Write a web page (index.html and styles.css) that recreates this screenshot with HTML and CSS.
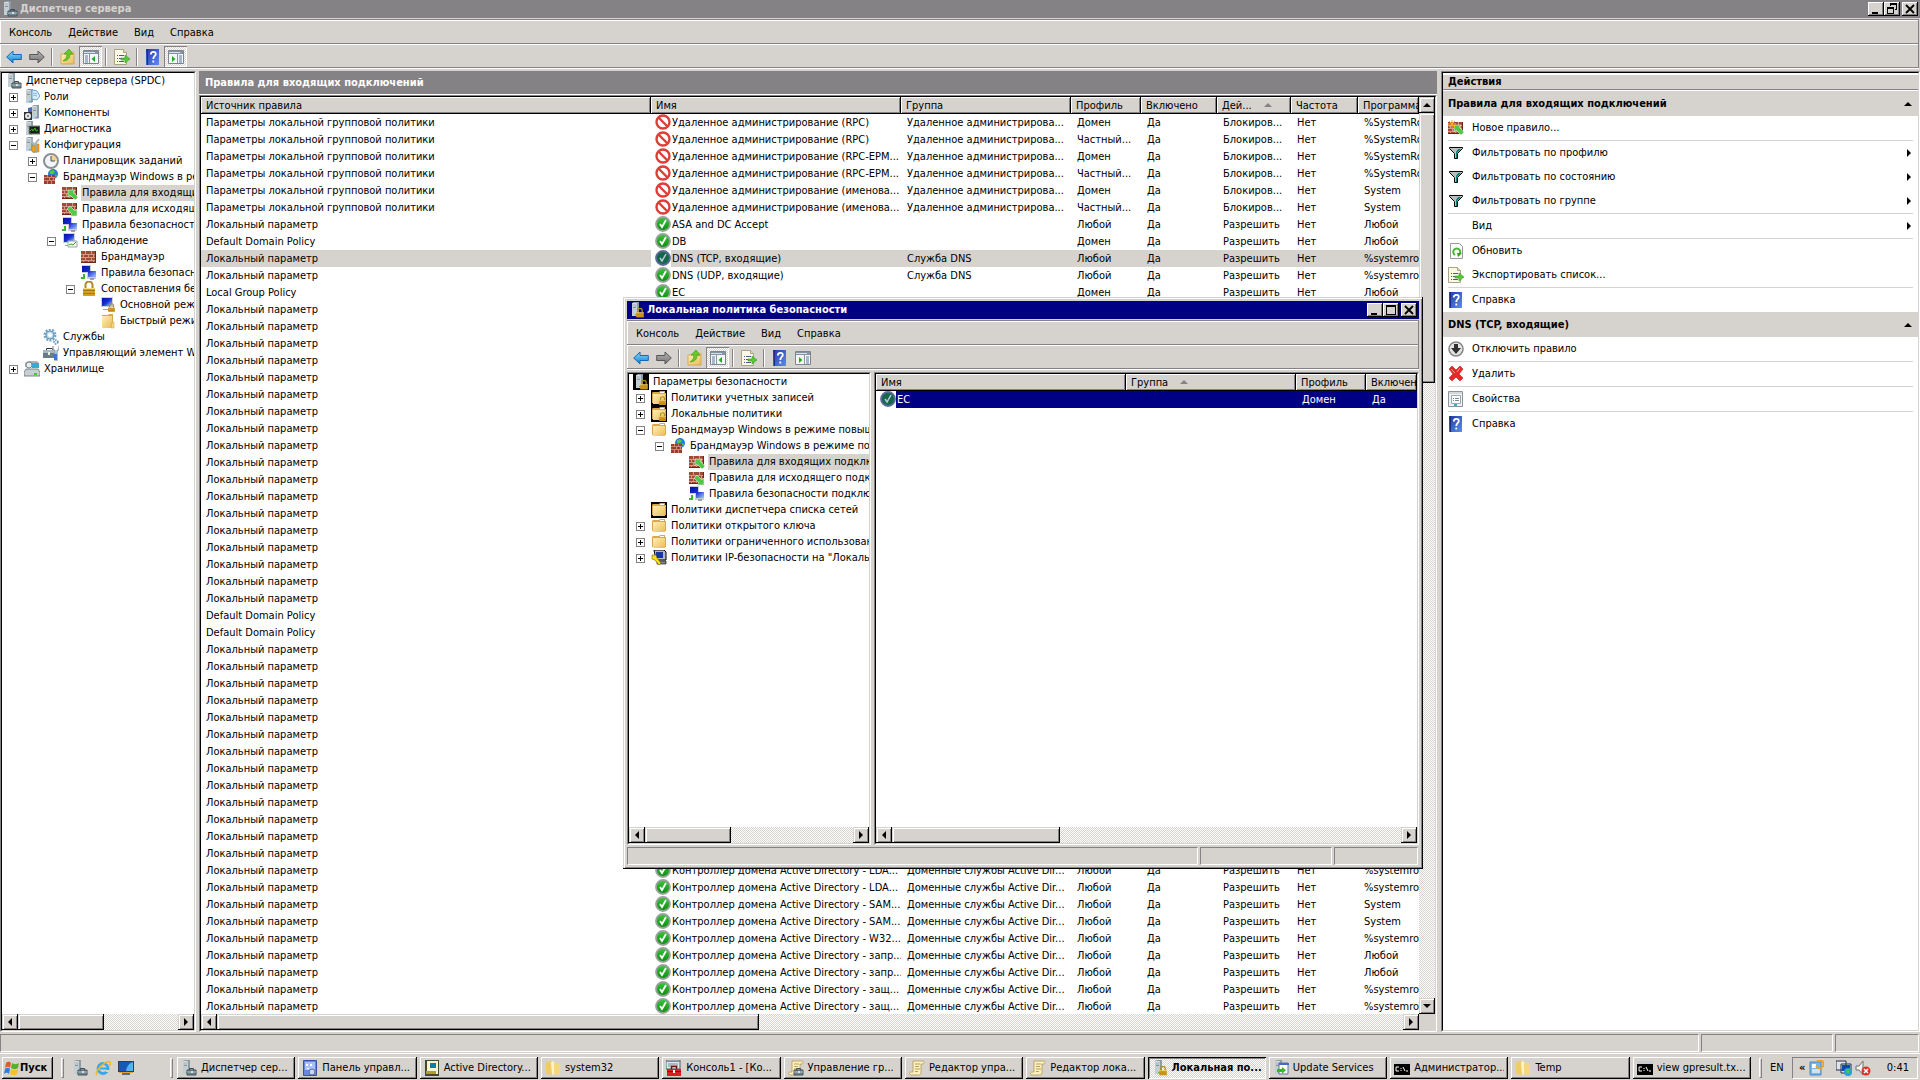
FILE: index.html
```html
<!DOCTYPE html>
<html lang="ru">
<head>
<meta charset="utf-8">
<title>Диспетчер сервера</title>
<link rel="stylesheet" href="styles.css">
</head>
<body>
<svg class="sprite" aria-hidden="true">
  <defs>
    <linearGradient id="g-blue" x1="0" y1="0" x2="0" y2="1"><stop offset="0" stop-color="#8fdcff"/><stop offset="1" stop-color="#0a7fd0"/></linearGradient>
    <linearGradient id="g-gray" x1="0" y1="0" x2="0" y2="1"><stop offset="0" stop-color="#b8b8b8"/><stop offset="1" stop-color="#707070"/></linearGradient>
    <linearGradient id="g-fold" x1="0" y1="0" x2="1" y2="1"><stop offset="0" stop-color="#fff0b8"/><stop offset="1" stop-color="#e8bc58"/></linearGradient>
    <linearGradient id="g-help" x1="0" y1="0" x2="1" y2="1"><stop offset="0" stop-color="#2238a8"/><stop offset="1" stop-color="#5f8cf0"/></linearGradient>
    <linearGradient id="g-scr" x1="0" y1="0" x2="1" y2="1"><stop offset="0" stop-color="#0010a0"/><stop offset=".5" stop-color="#1830d0"/><stop offset="1" stop-color="#a8c8ff"/></linearGradient>
    <linearGradient id="g-ok" x1="0" y1="0" x2="0" y2="1"><stop offset="0" stop-color="#3cc83c"/><stop offset="1" stop-color="#0a8a10"/></linearGradient>
    <symbol id="tower" viewBox="0 0 16 16"><path d="M2 1l2-1h5v13l-2 1H2z" fill="#8d9da6"/><path d="M2 1h5v13H2z" fill="#c3ced4"/><path d="M3 3h3M3 5h3" stroke="#4c5a62"/><path d="M3 2h3M3 4h3" stroke="#eef3f5"/><path d="M5 12h2v1H5z" fill="#38d818"/></symbol>
    <symbol id="case" viewBox="0 0 16 16"><path d="M8.500 10V8.500h4V10" fill="none" stroke="#3c4650"/><path d="M6 10h9v5H6z" fill="#6e8490" stroke="#46545c"/><path d="M6 12h9" stroke="#aebcc4"/><path d="M10 11h2v2h-2z" fill="#d8e0e4"/></symbol>
    <symbol id="server" viewBox="0 0 16 16"><use href="#tower"/><use href="#case"/></symbol>
    <symbol id="roles" viewBox="0 0 16 16"><use href="#tower"/><path d="M8 1l5 1 3 5-3 4-5-1z" fill="#d8ecfa" stroke="#6aa4d0"/><path d="M9 4l4 1M9 6l4 1" stroke="#88b8e0"/></symbol>
    <symbol id="features" viewBox="0 0 16 16"><g transform="translate(6 0)"><use href="#tower"/></g><path d="M4 3l4-1v8l-4 2z" fill="#5468b8"/><path d="M0 7h8v8H0z" fill="#303438"/><circle cx="4" cy="11" r="3" fill="#e8e8e8"/><circle cx="4" cy="11" r="1" fill="#606060"/></symbol>
    <symbol id="diag" viewBox="0 0 16 16"><use href="#tower"/><path d="M5 5h11v8H5z" fill="#182018" stroke="#808880"/><path d="M6 10l2-2 1 2 2-3 1 3 2-1" fill="none" stroke="#38b818"/></symbol>
    <symbol id="config" viewBox="0 0 16 16"><use href="#tower"/><path d="M8 1v4l2 2v8h2V6l3-4" fill="none" stroke="#a8b4bc" stroke-width="2"/><path d="M8 9h3v6H8zM13 7h2v8h-2z" fill="#f0a820" stroke="#c07808" stroke-width=".5"/></symbol>
    <symbol id="clock" viewBox="0 0 16 16"><circle cx="8" cy="8" r="7" fill="#f2f6fa" stroke="#8a9096" stroke-width="2"/><path d="M8 8V2a6 6 0 0 1 6 6z" fill="#f4cf90"/><path d="M8 3v5h4" fill="none" stroke="#405060"/></symbol>
    <symbol id="wall" viewBox="0 0 16 16"><path d="M0 2h15v12H0z" fill="#a44a34"/><path d="M0 5.500h15M0 8.500h15M0 11.500h15M4.500 2v3M10.500 2v3M2.500 6v2M7.500 6v2M12.500 6v2M4.500 9v2M10.500 9v2M2.500 12v2M7.500 12v2M12.500 12v2" stroke="#cf9a88"/><path d="M0 13.500h15M14.500 2v12" stroke="#6e2818"/></symbol>
    <symbol id="globewall" viewBox="0 0 16 16"><circle cx="10" cy="5" r="5" fill="#2a78d8"/><path d="M7 2l3-1 2 2-2 2-3 0zM12 5l2 1-1 3z" fill="#58c838"/><path d="M1 6h11v9H1z" fill="#98402c"/><path d="M1 8.500h11M1 11.500h11M4.500 6v2M8.500 6v2M6.500 9v2M10.500 9v2M4.500 12v3M8.500 12v3" stroke="#c88878"/></symbol>
    <symbol id="rulein" viewBox="0 0 16 16"><use href="#wall"/><path d="M6 5h7l-2 2 5 5-3 3-5-5-2 2z" fill="#50c848" stroke="#e4f8e0" stroke-width=".6"/></symbol>
    <symbol id="ruleout" viewBox="0 0 16 16"><use href="#wall"/><path d="M15 15H8l2-2-5-5 3-3 5 5 2-2z" fill="#50c848" stroke="#e4f8e0" stroke-width=".6"/></symbol>
    <symbol id="newrule" viewBox="0 0 16 16"><use href="#rulein"/><path d="M4 0v8M0 4h8M1 1l6 6M7 1L1 7" stroke="#f8b020"/></symbol>
    <symbol id="nets" viewBox="0 0 16 16"><path d="M1 0h9v8H1zM6 6h9v8H6z" fill="#c8ccd4"/><path d="M1 1h8v6H1zM7 6h8v6H7z" fill="url(#g-scr)"/><path d="M9 13h4v2H9z" fill="#98a0a8"/><path d="M0 12h4v2H0zM2 9h2v3H2z" fill="#38b828"/></symbol>
    <symbol id="monitor" viewBox="0 0 16 16"><path d="M1 0h12v10H1z" fill="#c8d0d8"/><path d="M2 1h10v8H2z" fill="url(#g-scr)"/><path d="M5 10h4v2H3v1h7v-3z" fill="#98a0a8"/></symbol>
    <symbol id="watch" viewBox="0 0 16 16"><use href="#monitor"/><path d="M6 8h9v6H6z" fill="#f0fff0" stroke="#90a8b8"/><path d="M7 12l2-1 2 1 3-3" fill="none" stroke="#28a828"/></symbol>
    <symbol id="lock" viewBox="0 0 16 16"><path d="M4.500 7V4a3.500 3.500 0 0 1 7 0v3" fill="none" stroke="#b08828" stroke-width="2"/><path d="M2 7h12v8H2z" fill="#d8a020"/><path d="M2 9.500h12M2 12.500h12" stroke="#a87810"/><path d="M2 7.500h12" stroke="#f8dc80"/></symbol>
    <symbol id="monlock" viewBox="0 0 16 16"><use href="#monitor"/><use href="#lock" x="7" y="6" width="9" height="10"/></symbol>
    <symbol id="folder" viewBox="0 0 16 16"><path d="M2 2h6l1-1h4v14H2z" fill="#d8a848"/><path d="M2 3h10v12H2z" fill="url(#g-fold)"/><path d="M12 9h2v6h-3z" fill="#f4d888" stroke="#c89838" stroke-width=".5"/></symbol>
    <symbol id="openfolder" viewBox="0 0 16 16"><path d="M1 3l1-1h6l1-1h5v2h1v10H1z" fill="#dca848"/><path d="M9 2h4v1H9z" fill="#fff"/><path d="M2 4h12v10H2z" fill="url(#g-fold)"/></symbol>
    <symbol id="folderdark" viewBox="0 0 16 16"><path d="M0 0h16v16H0z"/><use href="#openfolder"/></symbol>
    <symbol id="folderlock" viewBox="0 0 16 16"><use href="#folderdark"/><use href="#lock" x="7" y="6" width="9" height="10"/></symbol>
    <symbol id="seclock" viewBox="0 0 16 16"><use href="#tower" x="1"/><use href="#lock" x="6" y="6" width="10" height="10"/></symbol>
    <symbol id="seclockdark" viewBox="0 0 16 16"><path d="M0 0h16v16H0z"/><use href="#seclock"/></symbol>
    <symbol id="ipsec" viewBox="0 0 16 16"><path d="M3 0h10l2 2v8H5z" fill="#b8b8b8" stroke="#000"/><path d="M5 2h7v6H5z" fill="#1838a0"/><path d="M6 11h9v3H6z" fill="#888" stroke="#000" stroke-width=".6"/><path d="M1 5l4 0 1 3 4 5-2 2-4-5-3-1z" fill="#f8e020" stroke="#806000" stroke-width=".6"/></symbol>
    <symbol id="gears" viewBox="0 0 16 16"><circle cx="7" cy="6" r="5" fill="none" stroke="#78a4c4" stroke-width="3" stroke-dasharray="2 1.100"/><circle cx="7" cy="6" r="4" fill="#b8dcf0" stroke="#6894b4"/><circle cx="7" cy="6" r="2" fill="#fff"/><circle cx="13" cy="13" r="2" fill="#d8ecf8" stroke="#6894b4" stroke-width="1.500" stroke-dasharray="1.500 1"/></symbol>
    <symbol id="toolbox" viewBox="0 0 16 16"><path d="M3.500 5V3.500h6V5" fill="none" stroke="#303840"/><path d="M0 5h12v8H0z" fill="#687c88"/><path d="M0 5h12v3H0z" fill="#a8b8c0"/><path d="M5 7h2v3H5z" fill="#e8eef0"/><path d="M10 1v3l2 2v9h2V6l2-2V1" fill="none" stroke="#98a8b4" stroke-width="1.500"/><path d="M11 9h3v6h-3z" fill="#3878d0"/></symbol>
    <symbol id="disk" viewBox="0 0 16 16"><path d="M1 2l3-2h9l2 2v4H1z" fill="#a8b4b8"/><circle cx="5" cy="4" r="3" fill="#e8eef0" stroke="#78848c"/><path d="M8 2h7v5H8z" fill="#38a8d8"/><path d="M2 8h12l2 3v4H0v-4z" fill="#c8d0d4" stroke="#606c74" stroke-width=".8"/><path d="M10 12h3v2h-3z" fill="#38d018"/></symbol>
    <symbol id="ok" viewBox="0 0 16 16"><circle cx="8" cy="8" r="7" fill="url(#g-ok)" stroke="#9aa29c" stroke-width="1.800"/><path d="M5 8l2 3 4-7" fill="none" stroke="#fff" stroke-width="1.800"/></symbol>
    <symbol id="oksel" viewBox="0 0 16 16"><circle cx="8" cy="8" r="7" fill="#146848" stroke="#5c6c98" stroke-width="1.800"/><path d="M5 8l2 3 4-7" fill="none" stroke="#b8c8e0" stroke-width="1.500"/></symbol>
    <symbol id="deny" viewBox="0 0 16 16"><circle cx="8" cy="8" r="6.500" fill="#fff" stroke="#e03c38" stroke-width="2.400"/><path d="M3.500 3.500l9 9" stroke="#e03c38" stroke-width="2.400"/></symbol>
    <symbol id="back" viewBox="0 0 16 16"><path d="M.7 8L7 2v3.500h8.300v5H7V14z" fill="url(#g-blue)" stroke="#1468b8"/></symbol>
    <symbol id="fwd" viewBox="0 0 16 16"><path d="M15.300 8L9 2v3.500H.7v5H9V14z" fill="url(#g-gray)" stroke="#585858"/></symbol>
    <symbol id="up" viewBox="0 0 16 16"><path d="M1 5h13v10H1z" fill="url(#g-fold)" stroke="#d0a040" stroke-width=".8"/><path d="M10 3h4v2h-4z" fill="#f8e0a0" stroke="#d0a040" stroke-width=".6"/><path d="M3 12c3-2 4-4 4-7H4l5-5 4 5h-3c0 4-2 7-7 7z" fill="#68c828" stroke="#389810" stroke-width=".6"/></symbol>
    <symbol id="paneleft" viewBox="0 0 16 16"><path d="M.5 1.500h15v13H.5z" fill="#f4f6f8" stroke="#7c8690"/><path d="M1 2h14v3H1z" fill="#8494a4"/><path d="M1 3.500h11" stroke="#d8e0e8"/><path d="M2 7h3M2 9h3M2 11h3M2 13h3" stroke="#5878a8"/><path d="M6.500 5v9" stroke="#8894a0"/><path d="M12 7v6L8.500 10z" fill="#28a828"/></symbol>
    <symbol id="paneright" viewBox="0 0 16 16"><path d="M.5 1.500h15v13H.5z" fill="#f4f6f8" stroke="#7c8690"/><path d="M1 2h14v3H1z" fill="#8494a4"/><path d="M1 3.500h11" stroke="#d8e0e8"/><path d="M11 7h3M11 9h3M11 11h3M11 13h3" stroke="#5878a8"/><path d="M9.500 5v9" stroke="#8894a0"/><path d="M4 7v6l3.500-3z" fill="#28a828"/></symbol>
    <symbol id="export" viewBox="0 0 16 16"><path d="M.5.500h9l3 3v12H.5z" fill="#fbf8e4" stroke="#a8a488"/><path d="M9.500.500v3h3" fill="#e4dfc0" stroke="#a8a488"/><path d="M3 6.500h1M5 6.500h5M3 9.500h1M5 9.500h3M3 12.500h1M5 12.500h5" stroke="#50588c"/><path d="M7 9h4V6l5 4-5 4v-3H7z" fill="#58c838" stroke="#38a020" stroke-width=".6"/></symbol>
    <symbol id="help" viewBox="0 0 16 16"><path d="M1 0h13v16H1z" fill="url(#g-help)"/><path d="M2.500 0v16" stroke="#1c2c88"/><path d="M5.800 5.500c0-3.500 5-3.500 5-.5 0 2-2.500 2-2.500 5M8.300 11.500v2" fill="none" stroke="#fff" stroke-width="1.800"/></symbol>
    <symbol id="funnel" viewBox="0 0 16 16"><path d="M1.500 2.500h13v1l-5 5v5h-3v-5l-5-5z" fill="#b8c0c0" stroke="#000"/><path d="M10 4h3L9 8v5H8V7z" fill="#008080"/></symbol>
    <symbol id="refresh" viewBox="0 0 16 16"><path d="M2.500.500h9l3 3v12h-12z" fill="#fafafa" stroke="#9a9a9a"/><path d="M7 12a3.500 3.500 0 1 1 3.500 0" fill="none" stroke="#48b830" stroke-width="2"/><path d="M9 10h5l-4 4z" fill="#38a020"/></symbol>
    <symbol id="disable" viewBox="0 0 16 16"><circle cx="8" cy="8" r="7" fill="#e4e4e4" stroke="#888" stroke-width="1.600"/><path d="M6 3h4v4h3l-5 6-5-6h3z" fill="#303030"/></symbol>
    <symbol id="delete" viewBox="0 0 16 16"><path d="M1 3l3-3 4 4 4-4 3 3-4 5 4 4-3 3-4-4-4 4-3-3 4-4z" fill="#e82828" stroke="#b81818" stroke-width=".6"/><path d="M3 3l4 4M12 2L9 6" stroke="#ff9898"/></symbol>
    <symbol id="props" viewBox="0 0 16 16"><path d="M.5.500h14v15H.5z" fill="#eef0f2" stroke="#8c949c"/><path d="M3.500 4.500h9v8h-9z" fill="#fff" stroke="#a0a8b0"/><path d="M1 2h13" stroke="#b8c0c8"/><path d="M5 7.500h1M7 7.500h4M5 9.500h1M7 9.500h4" stroke="#808890"/><path d="M6 14h3" stroke="#28b0e0" stroke-width="2"/></symbol>
    <symbol id="flag" viewBox="0 0 16 16"><path d="M2 3c2-2 4-1 5 0L6 8C5 7 3 6 1 8z" fill="#e85820"/><path d="M8 3c2 1 4 2 7 0l-1 5c-3 2-5 1-7 0z" fill="#58b028"/><path d="M1 9c2-2 4-1 5 0l-1 5c-1-1-3-2-5 0z" fill="#3080d8"/><path d="M7 9c2 1 4 2 7 0l-1 5c-3 2-5 1-7 0z" fill="#f8c020"/></symbol>
    <symbol id="ie" viewBox="0 0 16 16"><circle cx="8" cy="8.500" r="5" fill="none" stroke="#38a8e8" stroke-width="2.800"/><path d="M5 8.500h8" stroke="#38a8e8" stroke-width="2"/><path d="M11 10h4v2h-4z" fill="#d6d3ce"/><path d="M2 15C-1 12 10 0 15 2c1 1 0 3-1 4" fill="none" stroke="#f0b820" stroke-width="1.500"/></symbol>
    <symbol id="desktop" viewBox="0 0 16 16"><path d="M0 1h16v11H0z" fill="#383c50"/><path d="M1 2h14v9H1z" fill="#1858b8"/><path d="M8 11C9 5 12 3 15 2v9z" fill="#58b0f0"/><path d="M1 12h14v1H1z" fill="#e0a030"/><path d="M4 13h8v2H4z" fill="#60687c"/></symbol>
    <symbol id="cpl" viewBox="0 0 16 16"><path d="M1.500.500h13v15h-13z" fill="#6888e0" stroke="#3850a8"/><path d="M3 2h10v8H3z" fill="#a8c0f8"/><path d="M4 4h2v2H4zM8 4h2v2H8zM5 8h2v1H5z" fill="#fff"/><circle cx="10" cy="12" r="3" fill="#c8d4e8" stroke="#5868a0"/></symbol>
    <symbol id="ad" viewBox="0 0 16 16"><path d="M1 0h14v16H1z" fill="#404c30"/><path d="M3 1h11v13H3z" fill="#f8f4d0"/><path d="M6 3h6v5H6z" fill="#1878a0"/><path d="M2 11h10v3H2z" fill="#b0a028"/></symbol>
    <symbol id="mmc" viewBox="0 0 16 16"><path d="M0 0h14v9H0z" fill="#e4e8ec" stroke="#485868"/><path d="M0 1.500h14M2 4h10M2 6h10" stroke="#788898"/><path d="M5.500 9V6.500h5V9" fill="none" stroke="#701010" stroke-width="1.500"/><path d="M1 9h14v7H1z" fill="#d82020"/><path d="M1 11.500h14" stroke="#881010"/><path d="M7 10h2v3H7z" fill="#fff"/></symbol>
    <symbol id="scroll" viewBox="0 0 16 16"><path d="M4 1h10c2 0 1 3 0 3h-2v9c0 2-2 2-3 2H2c-2 0-2-3 0-3h2z" fill="#fbf0c0" stroke="#b89850" stroke-width=".8"/><path d="M6 4h5M6 6.500h4M6 9h5M6 11.500h3" stroke="#b8a060"/></symbol>
    <symbol id="gpm" viewBox="0 0 16 16"><use href="#scroll"/><use href="#case"/></symbol>
    <symbol id="wsus" viewBox="0 0 16 16"><use href="#tower"/><path d="M6 3h9v11H6z" fill="#fff" stroke="#6070a8"/><path d="M6 3h10v2H6z" fill="#5068b8"/><path d="M4 9h5V7l4 3-4 4v-2H4z" fill="#38b828"/></symbol>
    <symbol id="cmd" viewBox="0 0 16 16"><path d="M0 1h16v14H0z" fill="#000"/><path d="M0 1h16v3H0z" fill="#c8ccd0"/><path d="M5 7H2v4h3M7 8v1M7 10v1M9 7l2 4M12 11h2" fill="none" stroke="#fff"/></symbol>
    <symbol id="open2" viewBox="0 0 16 16"><path d="M1 2l6-1v14l-6-1z" fill="#f0cc68"/><path d="M6 2l3-1 1 12-3 2z" fill="#fff4c0"/><path d="M9 3l6 1v10l-6 1z" fill="#f4d880"/></symbol>
    <symbol id="wupd" viewBox="0 0 16 16"><path d="M2 2h11v13H2z" fill="#78b8e8" stroke="#4888c0"/><path d="M4 4h4v4H4z" fill="#fff"/><path d="M4 9h8v4H4z" fill="#c8e4f8"/><path d="M9 1a4 4 0 1 1-1 5" fill="none" stroke="#f0a020" stroke-width="2"/></symbol>
    <symbol id="net" viewBox="0 0 16 16"><path d="M0 1h10v9H0zM5 4h10v9H5z" fill="#e0e4e8" stroke="#203048"/><path d="M6 5h8v6H6z" fill="#0848b0"/><circle cx="12" cy="12" r="4" fill="#28a0d8"/><path d="M10 10l3-1 1 3-3 2z" fill="#48c838"/></symbol>
    <symbol id="mute" viewBox="0 0 16 16"><path d="M1 6h3l4-5v14l-4-5H1z" fill="#f0f0f0" stroke="#707070"/><circle cx="11" cy="11" r="4.500" fill="#e03028"/><path d="M9 9l4 4M13 9l-4 4" stroke="#fff" stroke-width="1.500"/></symbol>
    <symbol id="tl" viewBox="0 0 8 8"><path d="M6 0v8L2 4z"/></symbol>
    <symbol id="tr" viewBox="0 0 8 8"><path d="M2 0v8l4-4z"/></symbol>
    <symbol id="tu" viewBox="0 0 8 8"><path d="M0 6h8L4 2z"/></symbol>
    <symbol id="td" viewBox="0 0 8 8"><path d="M0 2h8L4 6z"/></symbol>
    <symbol id="wmin" viewBox="0 0 14 12"><path d="M3 9h6v2H3z"/></symbol>
    <symbol id="wmax" viewBox="0 0 14 12"><path d="M2 1h10v10H2zM3 3v7h8V3z" fill-rule="evenodd"/></symbol>
    <symbol id="wres" viewBox="0 0 14 12"><path d="M5 0h7v7h-2V6h1V2H6v1H5z"/><path d="M2 4h7v7H2zM3 6v4h5V6z" fill-rule="evenodd"/></symbol>
    <symbol id="wx" viewBox="0 0 14 12"><path d="M3 2l8 8M11 2l-8 8" stroke="#000" stroke-width="1.800"/></symbol>
  </defs>
</svg>

<div class="app">
  <header class="titlebar">
    <svg class="ico"><use href="#server"/></svg>
    <h1 class="caption">Диспетчер сервера</h1>
    <div class="winbtns">
      <button class="wb" aria-label="Свернуть"><svg><use href="#wmin"/></svg></button><button class="wb" aria-label="Восстановить"><svg><use href="#wres"/></svg></button><button class="wb wb-close" aria-label="Закрыть"><svg><use href="#wx"/></svg></button>
    </div>
  </header>
  <div class="bars">
    <nav class="menubar"><button>Консоль</button><button>Действие</button><button>Вид</button><button>Справка</button></nav>
    <div class="toolbar">
      <button class="tb" aria-label="Назад"><svg class="ico"><use href="#back"/></svg></button>
      <button class="tb" aria-label="Вперед"><svg class="ico"><use href="#fwd"/></svg></button>
      <i class="sep"></i>
      <button class="tb" aria-label="Вверх"><svg class="ico"><use href="#up"/></svg></button>
      <button class="tb on" aria-label="Дерево консоли"><svg class="ico"><use href="#paneleft"/></svg></button>
      <i class="sep"></i>
      <button class="tb" aria-label="Экспорт"><svg class="ico"><use href="#export"/></svg></button>
      <i class="sep"></i>
      <button class="tb" aria-label="Справка"><svg class="ico"><use href="#help"/></svg></button>
      <button class="tb on" aria-label="Панель действий"><svg class="ico"><use href="#paneright"/></svg></button>
    </div>
  </div>

  <main class="main">
    <section class="sunken side"><div class="sunken-in">
      <div class="tree">
        <div class="row root"><svg class="ico"><use href="#server"/></svg><span>Диспетчер сервера (SPDC)</span></div>
        <ul>
          <li><div class="row"><i class="box plus"></i><svg class="ico"><use href="#roles"/></svg><span>Роли</span></div></li>
          <li><div class="row"><i class="box plus"></i><svg class="ico"><use href="#features"/></svg><span>Компоненты</span></div></li>
          <li><div class="row"><i class="box plus"></i><svg class="ico"><use href="#diag"/></svg><span>Диагностика</span></div></li>
          <li><div class="row"><i class="box"></i><svg class="ico"><use href="#config"/></svg><span>Конфигурация</span></div>
            <ul>
              <li><div class="row"><i class="box plus"></i><svg class="ico"><use href="#clock"/></svg><span>Планировщик заданий</span></div></li>
              <li><div class="row"><i class="box"></i><svg class="ico"><use href="#globewall"/></svg><span>Брандмауэр Windows в режиме</span></div>
                <ul>
                  <li><div class="row"><i class="nobox"></i><svg class="ico"><use href="#rulein"/></svg><span class="cur">Правила для входящих</span></div></li>
                  <li><div class="row"><i class="nobox"></i><svg class="ico"><use href="#ruleout"/></svg><span>Правила для исходящего</span></div></li>
                  <li><div class="row"><i class="nobox"></i><svg class="ico"><use href="#nets"/></svg><span>Правила безопасности</span></div></li>
                  <li><div class="row"><i class="box"></i><svg class="ico"><use href="#watch"/></svg><span>Наблюдение</span></div>
                    <ul>
                      <li><div class="row"><i class="nobox"></i><svg class="ico"><use href="#wall"/></svg><span>Брандмауэр</span></div></li>
                      <li><div class="row"><i class="nobox"></i><svg class="ico"><use href="#nets"/></svg><span>Правила безопасности</span></div></li>
                      <li><div class="row"><i class="box"></i><svg class="ico"><use href="#lock"/></svg><span>Сопоставления безопасности</span></div>
                        <ul>
                          <li><div class="row"><i class="nobox"></i><svg class="ico"><use href="#monlock"/></svg><span>Основной режим</span></div></li>
                          <li><div class="row"><i class="nobox"></i><svg class="ico"><use href="#folder"/></svg><span>Быстрый режим</span></div></li>
                        </ul></li>
                    </ul></li>
                </ul></li>
              <li><div class="row"><i class="nobox"></i><svg class="ico"><use href="#gears"/></svg><span>Службы</span></div></li>
              <li><div class="row"><i class="nobox"></i><svg class="ico"><use href="#toolbox"/></svg><span>Управляющий элемент WMI</span></div></li>
            </ul></li>
          <li><div class="row"><i class="box plus"></i><svg class="ico"><use href="#disk"/></svg><span>Хранилище</span></div></li>
        </ul>
      </div>
      <div class="hscroll"><button class="sb" aria-label="Влево"><svg><use href="#tl"/></svg></button><div class="thumb t-side"></div><div class="fill"></div><button class="sb" aria-label="Вправо"><svg><use href="#tr"/></svg></button></div>
    </div></section>

    <section class="center">
      <h2 class="pane-title">Правила для входящих подключений</h2>
      <div class="sunken grow"><div class="sunken-in">
        <div class="list-area">
          <div class="list">
            <table class="grid">
              <colgroup><col class="c-src"><col class="c-name"><col class="c-grp"><col class="c-prof"><col class="c-on"><col class="c-act"><col class="c-freq"><col></colgroup>
              <thead><tr><th>Источник правила</th><th>Имя</th><th>Группа</th><th>Профиль</th><th>Включено</th><th>Дей...<svg class="sort s-act"><use href="#tu"/></svg></th><th>Частота</th><th>Программа</th></tr></thead>
              <tbody>
                <tr><td>Параметры локальной групповой политики</td><td><div class="nm"><svg class="ico"><use href="#deny"/></svg><span>Удаленное администрирование (RPC)</span></div></td><td>Удаленное администрирова...</td><td>Домен</td><td>Да</td><td>Блокиров...</td><td>Нет</td><td>%SystemRoot%</td></tr>
                <tr><td>Параметры локальной групповой политики</td><td><div class="nm"><svg class="ico"><use href="#deny"/></svg><span>Удаленное администрирование (RPC)</span></div></td><td>Удаленное администрирова...</td><td>Частный...</td><td>Да</td><td>Блокиров...</td><td>Нет</td><td>%SystemRoot%</td></tr>
                <tr><td>Параметры локальной групповой политики</td><td><div class="nm"><svg class="ico"><use href="#deny"/></svg><span>Удаленное администрирование (RPC-EPM...</span></div></td><td>Удаленное администрирова...</td><td>Домен</td><td>Да</td><td>Блокиров...</td><td>Нет</td><td>%SystemRoot%</td></tr>
                <tr><td>Параметры локальной групповой политики</td><td><div class="nm"><svg class="ico"><use href="#deny"/></svg><span>Удаленное администрирование (RPC-EPM...</span></div></td><td>Удаленное администрирова...</td><td>Частный...</td><td>Да</td><td>Блокиров...</td><td>Нет</td><td>%SystemRoot%</td></tr>
                <tr><td>Параметры локальной групповой политики</td><td><div class="nm"><svg class="ico"><use href="#deny"/></svg><span>Удаленное администрирование (именова...</span></div></td><td>Удаленное администрирова...</td><td>Домен</td><td>Да</td><td>Блокиров...</td><td>Нет</td><td>System</td></tr>
                <tr><td>Параметры локальной групповой политики</td><td><div class="nm"><svg class="ico"><use href="#deny"/></svg><span>Удаленное администрирование (именова...</span></div></td><td>Удаленное администрирова...</td><td>Частный...</td><td>Да</td><td>Блокиров...</td><td>Нет</td><td>System</td></tr>
                <tr><td>Локальный параметр</td><td><div class="nm"><svg class="ico"><use href="#ok"/></svg><span>ASA and DC Accept</span></div></td><td></td><td>Любой</td><td>Да</td><td>Разрешить</td><td>Нет</td><td>Любой</td></tr>
                <tr><td>Default Domain Policy</td><td><div class="nm"><svg class="ico"><use href="#ok"/></svg><span>DB</span></div></td><td></td><td>Домен</td><td>Да</td><td>Разрешить</td><td>Нет</td><td>Любой</td></tr>
                <tr class="picked"><td>Локальный параметр</td><td><div class="nm"><svg class="ico"><use href="#oksel"/></svg><span>DNS (TCP, входящие)</span></div></td><td>Служба DNS</td><td>Любой</td><td>Да</td><td>Разрешить</td><td>Нет</td><td>%systemroot%</td></tr>
                <tr><td>Локальный параметр</td><td><div class="nm"><svg class="ico"><use href="#ok"/></svg><span>DNS (UDP, входящие)</span></div></td><td>Служба DNS</td><td>Любой</td><td>Да</td><td>Разрешить</td><td>Нет</td><td>%systemroot%</td></tr>
                <tr><td>Local Group Policy</td><td><div class="nm"><svg class="ico"><use href="#ok"/></svg><span>EC</span></div></td><td></td><td>Домен</td><td>Да</td><td>Разрешить</td><td>Нет</td><td>Любой</td></tr>
                <tr><td>Локальный параметр</td></tr>
                <tr><td>Локальный параметр</td></tr>
                <tr><td>Локальный параметр</td></tr>
                <tr><td>Локальный параметр</td></tr>
                <tr><td>Локальный параметр</td></tr>
                <tr><td>Локальный параметр</td></tr>
                <tr><td>Локальный параметр</td></tr>
                <tr><td>Локальный параметр</td></tr>
                <tr><td>Локальный параметр</td></tr>
                <tr><td>Локальный параметр</td></tr>
                <tr><td>Локальный параметр</td></tr>
                <tr><td>Локальный параметр</td></tr>
                <tr><td>Локальный параметр</td></tr>
                <tr><td>Локальный параметр</td></tr>
                <tr><td>Локальный параметр</td></tr>
                <tr><td>Локальный параметр</td></tr>
                <tr><td>Локальный параметр</td></tr>
                <tr><td>Локальный параметр</td></tr>
                <tr><td>Default Domain Policy</td></tr>
                <tr><td>Default Domain Policy</td></tr>
                <tr><td>Локальный параметр</td></tr>
                <tr><td>Локальный параметр</td></tr>
                <tr><td>Локальный параметр</td></tr>
                <tr><td>Локальный параметр</td></tr>
                <tr><td>Локальный параметр</td></tr>
                <tr><td>Локальный параметр</td></tr>
                <tr><td>Локальный параметр</td></tr>
                <tr><td>Локальный параметр</td></tr>
                <tr><td>Локальный параметр</td></tr>
                <tr><td>Локальный параметр</td></tr>
                <tr><td>Локальный параметр</td></tr>
                <tr><td>Локальный параметр</td></tr>
                <tr><td>Локальный параметр</td></tr>
                <tr><td>Локальный параметр</td><td><div class="nm"><svg class="ico"><use href="#ok"/></svg><span>Контроллер домена Active Directory - LDA...</span></div></td><td>Доменные службы Active Dir...</td><td>Любой</td><td>Да</td><td>Разрешить</td><td>Нет</td><td>%systemroot%</td></tr>
                <tr><td>Локальный параметр</td><td><div class="nm"><svg class="ico"><use href="#ok"/></svg><span>Контроллер домена Active Directory - LDA...</span></div></td><td>Доменные службы Active Dir...</td><td>Любой</td><td>Да</td><td>Разрешить</td><td>Нет</td><td>%systemroot%</td></tr>
                <tr><td>Локальный параметр</td><td><div class="nm"><svg class="ico"><use href="#ok"/></svg><span>Контроллер домена Active Directory - SAM...</span></div></td><td>Доменные службы Active Dir...</td><td>Любой</td><td>Да</td><td>Разрешить</td><td>Нет</td><td>System</td></tr>
                <tr><td>Локальный параметр</td><td><div class="nm"><svg class="ico"><use href="#ok"/></svg><span>Контроллер домена Active Directory - SAM...</span></div></td><td>Доменные службы Active Dir...</td><td>Любой</td><td>Да</td><td>Разрешить</td><td>Нет</td><td>System</td></tr>
                <tr><td>Локальный параметр</td><td><div class="nm"><svg class="ico"><use href="#ok"/></svg><span>Контроллер домена Active Directory - W32...</span></div></td><td>Доменные службы Active Dir...</td><td>Любой</td><td>Да</td><td>Разрешить</td><td>Нет</td><td>%systemroot%</td></tr>
                <tr><td>Локальный параметр</td><td><div class="nm"><svg class="ico"><use href="#ok"/></svg><span>Контроллер домена Active Directory - запр...</span></div></td><td>Доменные службы Active Dir...</td><td>Любой</td><td>Да</td><td>Разрешить</td><td>Нет</td><td>Любой</td></tr>
                <tr><td>Локальный параметр</td><td><div class="nm"><svg class="ico"><use href="#ok"/></svg><span>Контроллер домена Active Directory - запр...</span></div></td><td>Доменные службы Active Dir...</td><td>Любой</td><td>Да</td><td>Разрешить</td><td>Нет</td><td>Любой</td></tr>
                <tr><td>Локальный параметр</td><td><div class="nm"><svg class="ico"><use href="#ok"/></svg><span>Контроллер домена Active Directory - защ...</span></div></td><td>Доменные службы Active Dir...</td><td>Любой</td><td>Да</td><td>Разрешить</td><td>Нет</td><td>%systemroot%</td></tr>
                <tr><td>Локальный параметр</td><td><div class="nm"><svg class="ico"><use href="#ok"/></svg><span>Контроллер домена Active Directory - защ...</span></div></td><td>Доменные службы Active Dir...</td><td>Любой</td><td>Да</td><td>Разрешить</td><td>Нет</td><td>%systemroot%</td></tr>
              </tbody>
            </table>
          </div>
          <div class="vscroll"><button class="sb" aria-label="Вверх"><svg><use href="#tu"/></svg></button><div class="thumb t-v"></div><div class="fill"></div><button class="sb" aria-label="Вниз"><svg><use href="#td"/></svg></button></div>
        </div>
        <div class="hscroll with-corner"><button class="sb" aria-label="Влево"><svg><use href="#tl"/></svg></button><div class="thumb t-main"></div><div class="fill"></div><button class="sb" aria-label="Вправо"><svg><use href="#tr"/></svg></button></div>
      </div></div>
    </section>

    <aside class="sunken actions"><div class="sunken-in">
      <h2 class="act-title">Действия</h2>
      <h3 class="act-group">Правила для входящих подключений<svg><use href="#tu"/></svg></h3>
      <button class="act"><svg class="ico"><use href="#newrule"/></svg><span>Новое правило...</span></button>
      <hr>
      <button class="act"><svg class="ico"><use href="#funnel"/></svg><span>Фильтровать по профилю</span><svg class="more"><use href="#tr"/></svg></button>
      <button class="act"><svg class="ico"><use href="#funnel"/></svg><span>Фильтровать по состоянию</span><svg class="more"><use href="#tr"/></svg></button>
      <button class="act"><svg class="ico"><use href="#funnel"/></svg><span>Фильтровать по группе</span><svg class="more"><use href="#tr"/></svg></button>
      <hr>
      <button class="act"><i class="ico"></i><span>Вид</span><svg class="more"><use href="#tr"/></svg></button>
      <hr>
      <button class="act"><svg class="ico"><use href="#refresh"/></svg><span>Обновить</span></button>
      <button class="act"><svg class="ico"><use href="#export"/></svg><span>Экспортировать список...</span></button>
      <hr>
      <button class="act"><svg class="ico"><use href="#help"/></svg><span>Справка</span></button>
      <h3 class="act-group">DNS (TCP, входящие)<svg><use href="#tu"/></svg></h3>
      <button class="act"><svg class="ico"><use href="#disable"/></svg><span>Отключить правило</span></button>
      <hr>
      <button class="act"><svg class="ico"><use href="#delete"/></svg><span>Удалить</span></button>
      <hr>
      <button class="act"><svg class="ico"><use href="#props"/></svg><span>Свойства</span></button>
      <hr>
      <button class="act"><svg class="ico"><use href="#help"/></svg><span>Справка</span></button>
    </div></aside>
  </main>

  <footer class="status"><div class="st-main"></div><div class="st-mid"></div><div class="st-end"></div></footer>

  <nav class="taskbar">
    <button class="task start"><svg class="ico"><use href="#flag"/></svg>Пуск</button>
    <i class="grip"></i>
    <div class="quick">
      <button class="tb" aria-label="Диспетчер сервера"><svg class="ico"><use href="#server"/></svg></button>
      <button class="tb" aria-label="Internet Explorer"><svg class="ico"><use href="#ie"/></svg></button>
      <button class="tb" aria-label="Рабочий стол"><svg class="ico"><use href="#desktop"/></svg></button>
    </div>
    <i class="grip"></i>
    <div class="tasks">
      <button class="task"><svg class="ico"><use href="#server"/></svg><span>Диспетчер сер...</span></button>
      <button class="task"><svg class="ico"><use href="#cpl"/></svg><span>Панель управл...</span></button>
      <button class="task"><svg class="ico"><use href="#ad"/></svg><span>Active Directory...</span></button>
      <button class="task"><svg class="ico"><use href="#open2"/></svg><span>system32</span></button>
      <button class="task"><svg class="ico"><use href="#mmc"/></svg><span>Консоль1 - [Ко...</span></button>
      <button class="task"><svg class="ico"><use href="#gpm"/></svg><span>Управление гр...</span></button>
      <button class="task"><svg class="ico"><use href="#scroll"/></svg><span>Редактор упра...</span></button>
      <button class="task"><svg class="ico"><use href="#scroll"/></svg><span>Редактор лока...</span></button>
      <button class="task active"><svg class="ico"><use href="#seclock"/></svg><span>Локальная по...</span></button>
      <button class="task"><svg class="ico"><use href="#wsus"/></svg><span>Update Services</span></button>
      <button class="task"><svg class="ico"><use href="#cmd"/></svg><span>Администратор...</span></button>
      <button class="task"><svg class="ico"><use href="#open2"/></svg><span>Temp</span></button>
      <button class="task"><svg class="ico"><use href="#cmd"/></svg><span>view gpresult.tx...</span></button>
    </div>
    <i class="grip"></i>
    <span class="lang">EN</span>
    <div class="tray"><b>«</b><svg class="ico t1"><use href="#wupd"/></svg><svg class="ico"><use href="#net"/></svg><svg class="ico"><use href="#mute"/></svg><time>0:41</time></div>
  </nav>
</div>

<section class="dialog" role="dialog" aria-label="Локальная политика безопасности">
  <header class="titlebar focus">
    <svg class="ico"><use href="#seclock"/></svg>
    <h1 class="caption">Локальная политика безопасности</h1>
    <div class="winbtns">
      <button class="wb" aria-label="Свернуть"><svg><use href="#wmin"/></svg></button><button class="wb" aria-label="Развернуть"><svg><use href="#wmax"/></svg></button><button class="wb wb-close" aria-label="Закрыть"><svg><use href="#wx"/></svg></button>
    </div>
  </header>
  <div class="bars">
    <nav class="menubar"><button>Консоль</button><button>Действие</button><button>Вид</button><button>Справка</button></nav>
    <div class="toolbar">
      <button class="tb" aria-label="Назад"><svg class="ico"><use href="#back"/></svg></button>
      <button class="tb" aria-label="Вперед"><svg class="ico"><use href="#fwd"/></svg></button>
      <i class="sep"></i>
      <button class="tb" aria-label="Вверх"><svg class="ico"><use href="#up"/></svg></button>
      <button class="tb on" aria-label="Дерево консоли"><svg class="ico"><use href="#paneleft"/></svg></button>
      <i class="sep"></i>
      <button class="tb" aria-label="Экспорт"><svg class="ico"><use href="#export"/></svg></button>
      <i class="sep"></i>
      <button class="tb" aria-label="Справка"><svg class="ico"><use href="#help"/></svg></button>
      <button class="tb" aria-label="Панель действий"><svg class="ico"><use href="#paneright"/></svg></button>
    </div>
  </div>
  <div class="dlg-main">
    <div class="sunken dlg-tree"><div class="sunken-in">
      <div class="tree">
        <div class="row root"><svg class="ico"><use href="#seclockdark"/></svg><span>Параметры безопасности</span></div>
        <ul>
          <li><div class="row"><i class="box plus"></i><svg class="ico"><use href="#folderlock"/></svg><span>Политики учетных записей</span></div></li>
          <li><div class="row"><i class="box plus"></i><svg class="ico"><use href="#folderlock"/></svg><span>Локальные политики</span></div></li>
          <li><div class="row"><i class="box"></i><svg class="ico"><use href="#openfolder"/></svg><span>Брандмауэр Windows в режиме повышенной</span></div>
            <ul>
              <li><div class="row"><i class="box"></i><svg class="ico"><use href="#globewall"/></svg><span>Брандмауэр Windows в режиме повышенной</span></div>
                <ul>
                  <li><div class="row"><i class="nobox"></i><svg class="ico"><use href="#rulein"/></svg><span class="cur">Правила для входящих подключений</span></div></li>
                  <li><div class="row"><i class="nobox"></i><svg class="ico"><use href="#ruleout"/></svg><span>Правила для исходящего подк.</span></div></li>
                  <li><div class="row"><i class="nobox"></i><svg class="ico"><use href="#nets"/></svg><span>Правила безопасности подключения</span></div></li>
                </ul></li>
            </ul></li>
          <li><div class="row"><i class="nobox"></i><svg class="ico"><use href="#folderdark"/></svg><span>Политики диспетчера списка сетей</span></div></li>
          <li><div class="row"><i class="box plus"></i><svg class="ico"><use href="#openfolder"/></svg><span>Политики открытого ключа</span></div></li>
          <li><div class="row"><i class="box plus"></i><svg class="ico"><use href="#openfolder"/></svg><span>Политики ограниченного использования</span></div></li>
          <li><div class="row"><i class="box plus"></i><svg class="ico"><use href="#ipsec"/></svg><span>Политики IP-безопасности на "Локальный</span></div></li>
        </ul>
      </div>
      <div class="hscroll"><button class="sb" aria-label="Влево"><svg><use href="#tl"/></svg></button><div class="thumb t-side"></div><div class="fill"></div><button class="sb" aria-label="Вправо"><svg><use href="#tr"/></svg></button></div>
    </div></div>
    <div class="sunken grow"><div class="sunken-in">
      <div class="list">
        <table class="grid">
          <colgroup><col class="c-name"><col class="c-grp"><col class="c-prof"><col></colgroup>
          <thead><tr><th>Имя</th><th>Группа<svg class="sort"><use href="#tu"/></svg></th><th>Профиль</th><th>Включено</th></tr></thead>
          <tbody><tr class="focused"><td><div class="nm"><svg class="ico"><use href="#oksel"/></svg><span>EC</span></div></td><td></td><td>Домен</td><td>Да</td></tr></tbody>
        </table>
      </div>
      <div class="hscroll"><button class="sb" aria-label="Влево"><svg><use href="#tl"/></svg></button><div class="thumb t-dlg"></div><div class="fill"></div><button class="sb" aria-label="Вправо"><svg><use href="#tr"/></svg></button></div>
    </div></div>
  </div>
  <footer class="status"><div class="st-main"></div><div class="st-mid"></div><div class="st-end"></div></footer>
</section>
</body>
</html>
```
FILE: styles.css
```css
:root {
  --face: #d6d3ce;
  --shade: #848284;
  --navy: #000084;
  --dither: repeating-conic-gradient(#fff 0 25%, var(--face) 0 50%) 0 0 / 2px 2px;
}
* { box-sizing: border-box; }
body {
  margin: 0;
  background: var(--face);
  color: #000;
  font: 11px/16px "DejaVu Sans Condensed", "Noto Sans", sans-serif;
  overflow: hidden;
}
button { font: inherit; color: inherit; background: none; border: 0; padding: 0; margin: 0; text-align: left; white-space: nowrap; }
h1, h2, h3, ul { margin: 0; padding: 0; font-size: 11px; list-style: none; }
svg { display: block; flex: none; }
.sprite { position: absolute; width: 0; height: 0; }
.ico { width: 16px; height: 16px; flex: none; }

.app { display: flex; flex-direction: column; height: 100vh; min-height: 600px; }

/* Title bars */
.titlebar { display: flex; align-items: center; flex: none; height: 18px; padding: 0 2px; background: var(--shade); color: var(--face); }
.titlebar.focus { background: var(--navy); color: #fff; }
.caption { flex: 1; padding-left: 2px; white-space: nowrap; }
.winbtns { display: flex; }
.wb { display: flex; width: 16px; height: 14px; padding: 1px; background: var(--face); box-shadow: inset -1px -1px #000, inset 1px 1px #fff, inset -2px -2px var(--shade); }
.wb svg { width: 14px; height: 12px; }
.wb-close { margin-left: 2px; }

/* Menu and tool bars */
.bars { flex: none; margin: 1px 1px 0 0; border-right: 1px solid var(--shade); border-bottom: 1px solid var(--shade); box-shadow: 0 1px #fff; }
.menubar { display: flex; height: 24px; border-top: 1px solid var(--shade); box-shadow: inset 0 1px #fff, inset 1px 0 #fff; padding-left: 1px; }
.menubar button { padding: 2px 8px 0; }
.toolbar { display: flex; align-items: center; height: 24px; padding: 2px 0 0 2px; border-top: 1px solid var(--shade); box-shadow: inset 0 1px #fff, inset 1px 0 #fff; }
.tb { display: flex; align-items: center; justify-content: center; width: 23px; height: 21px; }
.tb.on { background: var(--dither); box-shadow: inset 1px 1px var(--shade), inset -1px -1px #fff; }
.sep { width: 2px; height: 18px; margin: 0 3px; border-left: 1px solid var(--shade); background: #fff; }

/* Sunken panes */
.sunken { display: flex; min-width: 0; min-height: 0; border: 1px solid; border-color: var(--shade) #fff #fff var(--shade); }
.sunken-in { flex: 1; display: flex; flex-direction: column; min-width: 0; min-height: 0; border: 1px solid; border-color: #000 var(--face) var(--face) #000; background: #fff; }
.grow { flex: 1; }
.main { flex: 1; display: flex; min-height: 0; margin-top: 3px; }
.side { flex: none; width: 196px; }
.center { flex: 1; display: flex; flex-direction: column; min-width: 0; margin: 0 4px 0 3px; }
.actions { flex: none; width: 479px; }
.pane-title { flex: none; height: 24px; padding: 4px 6px; background: var(--shade); color: #fff; border-bottom: 1px solid #fff; }

/* Console tree */
.tree { flex: 1; overflow: hidden; min-height: 0; }
.row { display: flex; height: 16px; padding-left: 7px; white-space: nowrap; }
.row.root { padding-left: 4px; }
.row span { margin-left: 3px; padding: 0 2px 0 1px; }
.row .cur { background: var(--face); }
.tree ul ul { padding-left: 19px; }
.box, .nobox { flex: none; width: 9px; height: 9px; margin: 4px 6px 0 0; }
.box { border: 1px solid var(--shade); background: linear-gradient(#000, #000) 1px 3px / 5px 1px no-repeat; }
.box.plus { background: linear-gradient(#000, #000) 1px 3px / 5px 1px no-repeat, linear-gradient(#000, #000) 3px 1px / 1px 5px no-repeat; }

/* Scroll bars */
.hscroll, .vscroll { display: flex; flex: none; background: var(--face); }
.hscroll { height: 16px; }
.vscroll { width: 16px; flex-direction: column; }
.with-corner { padding-right: 16px; }
.fill { flex: 1; background: var(--dither); }
.sb, .thumb { flex: none; background: var(--face); box-shadow: inset -1px -1px #000, inset 0 0 0 1px var(--face), inset 2px 2px #fff, inset -2px -2px var(--shade); }
.sb { display: flex; align-items: center; justify-content: center; width: 16px; height: 16px; }
.sb svg { width: 8px; height: 8px; }
.t-side { width: 86px; }
.t-main { width: 542px; }
.t-dlg { width: 168px; }
.t-v { height: 270px; }

/* Lists */
.list-area { flex: 1; display: flex; min-height: 0; }
.list { flex: 1; min-width: 0; min-height: 0; overflow: hidden; }
.grid { width: 100%; table-layout: fixed; border-collapse: separate; border-spacing: 0; }
.c-src { width: 450px; }
.c-name { width: 250px; }
.c-grp { width: 170px; }
.c-prof { width: 70px; }
.c-on { width: 76px; }
.c-act { width: 74px; }
.c-freq { width: 67px; }
th, td { height: 17px; line-height: 17px; padding: 0 0 0 5px; text-align: left; font-weight: normal; white-space: nowrap; overflow: hidden; }
th { background: var(--face); box-shadow: inset -1px -1px #000, inset 1px 1px #fff, inset -2px -2px var(--shade); }
td { padding-left: 6px; }
td:first-child { padding-left: 5px; }
.nm { display: flex; height: 17px; margin-left: -2px; }
.nm span { flex: 1; padding-left: 1px; }
.dialog .nm { margin-left: -1px; }
.sort { display: inline-block; width: 8px; height: 8px; margin-left: 12px; fill: var(--shade); }
.picked td { background: var(--face); }
.picked td:nth-child(2) { background: #fff; }
.picked .nm span { background: var(--face); }
.focused td { background: var(--navy); color: #fff; }
.focused td:first-child { background: #fff; }
.focused .nm span { background: var(--navy); }

/* Actions pane */
.act-title { height: 17px; margin-top: 1px; padding: 0 5px; line-height: 16px; background: var(--face); box-shadow: inset 0 1px #fff, inset 0 -1px #fff, inset 0 -2px var(--shade); }
.act-group { display: flex; align-items: center; justify-content: space-between; height: 25px; padding: 0 6px 0 5px; background: var(--face); }
.act-group svg { width: 8px; height: 8px; }
.act { display: flex; align-items: center; height: 24px; padding: 0 5px; }
.act span { flex: 1; padding-left: 8px; }
.more { width: 8px; height: 8px; }
hr { width: auto; height: 1px; margin: 0 5px; border: 0; background: var(--face); }

/* Status bars */
.status { display: flex; flex: none; gap: 2px; height: 18px; margin: 2px 1px 0 0; }
.status div { border: 1px solid; border-color: var(--shade) #fff #fff var(--shade); }
.st-main { flex: 1; }
.st-mid { width: 132px; }
.st-end { width: 84px; }

/* Task bar */
.taskbar { display: flex; align-items: center; flex: none; height: 27px; margin-top: 1px; padding: 1px 2px 0; border-top: 1px solid #fff; }
.task { display: flex; align-items: center; height: 22px; padding: 0 4px; background: var(--face); box-shadow: inset -1px -1px #000, inset 1px 1px #fff, inset -2px -2px var(--shade); }
.task span { padding-left: 4px; overflow: hidden; }
.start { flex: none; width: 51px; padding: 0 2px; font-weight: bold; }
.grip { flex: none; width: 3px; height: 20px; margin: 0 4px 0 8px; border: 1px solid; border-color: #fff var(--shade) var(--shade) #fff; }
.quick { display: flex; flex: none; width: 94px; padding-left: 0; }
.tasks { flex: 1; display: flex; gap: 3px; min-width: 0; }
.tasks .task { flex: 1 1 0; min-width: 0; }
.task.active { background: var(--dither); box-shadow: inset 1px 1px #000, inset -1px -1px #fff, inset 2px 2px var(--shade); font-weight: bold; }
.lang { flex: none; width: 26px; padding-left: 4px; }
.tray { display: flex; align-items: center; flex: none; gap: 3px; width: 126px; height: 22px; padding: 0 8px 0 6px; border: 1px solid; border-color: var(--shade) #fff #fff var(--shade); }
.tray .t1 { margin-right: 9px; }
.tray time { margin-left: auto; }

/* Floating window */
.dialog { position: absolute; left: 623px; top: 297px; display: flex; flex-direction: column; width: 800px; height: 572px; padding: 4px; background: var(--face); box-shadow: inset -1px -1px #000, inset 1px 1px var(--face), inset 2px 2px #fff, inset -2px -2px var(--shade); }
.dialog .bars { margin-right: 0; }
.dlg-main { flex: 1; display: flex; gap: 3px; min-height: 0; margin-top: 3px; }
.dlg-tree { flex: none; width: 244px; }
```
